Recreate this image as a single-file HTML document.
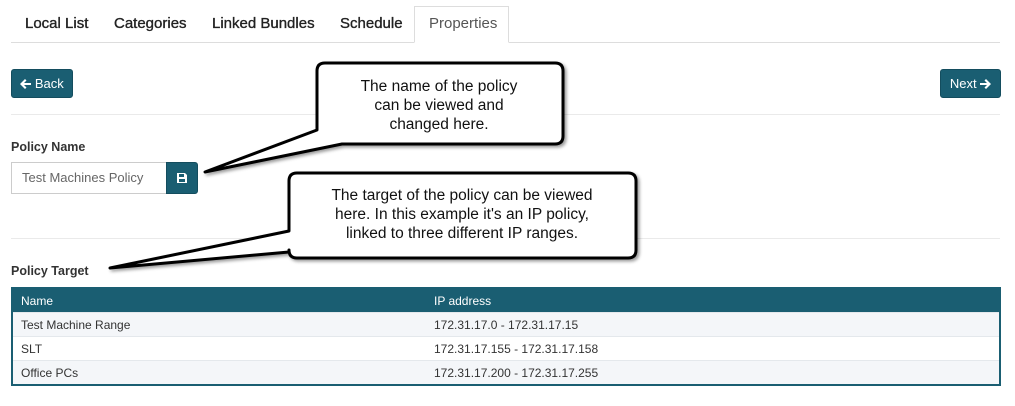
<!DOCTYPE html>
<html><head><style>
body{margin:0;width:1015px;height:406px;background:#fff;font-family:"Liberation Sans",sans-serif;position:relative;overflow:hidden;color:#333}
.a{position:absolute}
.tab{position:absolute;top:15px;font-size:15px;color:#222;-webkit-text-stroke:0.35px #222}
.btn{position:absolute;background:#1a5e72;color:#fff;border-radius:3px;font-size:13px;line-height:28px;text-align:center;border:1px solid #144d5e;box-sizing:border-box}
.hr{position:absolute;left:11px;width:989px;height:1px;background:#eaeaea}
table{position:absolute;left:11px;top:287px;width:990px;border-collapse:collapse;font-size:12px;border:2px solid #1a5e72}
td,th{padding:0 8px;height:23px;text-align:left;font-weight:normal;border-bottom:1px solid #e4e8ec}
th{background:#1a5e72;color:#fff;height:23px}
tr.g td{background:#f4f6f9}
</style></head><body>
<div class="a" style="left:11px;top:42px;width:989px;height:1px;background:#ddd"></div>
<div class="a" style="left:414px;top:6px;width:95px;height:37px;border:1px solid #ddd;border-bottom:1px solid #fff;box-sizing:border-box;background:#fff"></div>
<div class="tab" style="left:25px">Local List</div>
<div class="tab" style="left:114px">Categories</div>
<div class="tab" style="left:212px">Linked Bundles</div>
<div class="tab" style="left:340px">Schedule</div>
<div class="tab" style="left:429px;color:#555;-webkit-text-stroke:0">Properties</div>
<div class="btn" style="left:11px;top:69px;width:62px;height:29px"><svg width="11" height="10" viewBox="0 0 11 10" style="vertical-align:-1px"><path d="M0 5 L5 0 L6.5 1.5 L4 4 H11 V6 H4 L6.5 8.5 L5 10 Z" fill="#fff"/></svg> Back</div>
<div class="btn" style="left:940px;top:69px;width:61px;height:29px">Next <svg width="11" height="10" viewBox="0 0 11 10" style="vertical-align:-1px"><path d="M11 5 L6 0 L4.5 1.5 L7 4 H0 V6 H7 L4.5 8.5 L6 10 Z" fill="#fff"/></svg></div>
<div class="hr" style="top:114px"></div>
<div class="a" style="left:11px;top:140px;font-size:12.5px;font-weight:bold">Policy Name</div>
<div class="a" style="left:11px;top:162px;width:157px;height:32px;border:1px solid #ccc;box-sizing:border-box;font-size:13px;color:#666;line-height:30px;padding-left:10px">Test Machines Policy</div>
<div class="btn" style="left:166px;top:162px;width:32px;height:32px;border-radius:0 3px 3px 0"><svg width="10" height="10" viewBox="0 0 10 10" style="margin-top:10px"><path d="M0 0 H8 L10 2 V10 H0 Z" fill="#fff"/><rect x="2" y="1" width="5" height="3" fill="#1a5e72"/><rect x="2" y="6" width="6" height="3" fill="#1a5e72"/></svg></div>
<div class="hr" style="top:238px"></div>
<div class="a" style="left:11px;top:264px;font-size:12.5px;font-weight:bold">Policy Target</div>
<table>
<tr><th style="width:397px">Name</th><th>IP address</th></tr>
<tr class="g"><td>Test Machine Range</td><td>172.31.17.0 - 172.31.17.15</td></tr>
<tr><td>SLT</td><td>172.31.17.155 - 172.31.17.158</td></tr>
<tr class="g"><td>Office PCs</td><td>172.31.17.200 - 172.31.17.255</td></tr>
</table>
<svg class="a" style="left:0;top:0" width="1015" height="406">
<defs><filter id="s"><feDropShadow dx="2" dy="2" stdDeviation="1.5" flood-opacity="0.4"/></filter></defs>
<path filter="url(#s)" d="M325 63 H555 Q563 63 563 71 V136 Q563 144 555 144 H342 L205 172 L317 130 V71 Q317 63 325 63 Z" fill="#fff" stroke="#000" stroke-width="3" stroke-linejoin="round"/>
<path filter="url(#s)" d="M297 173 H628 Q636 173 636 181 V250 Q636 258 628 258 H297 Q289 258 289 250 V252 L110 268 L289 231 V181 Q289 173 297 173 Z" fill="#fff" stroke="#000" stroke-width="3" stroke-linejoin="round"/>
<g font-family="Liberation Sans,sans-serif" font-size="15.5" fill="#111" text-anchor="middle">
<text x="439" y="91">The name of the policy</text>
<text x="439" y="110">can be viewed and</text>
<text x="439" y="129">changed here.</text>
<text x="462" y="200">The target of the policy can be viewed</text>
<text x="462" y="219">here. In this example it's an IP policy,</text>
<text x="462" y="238">linked to three different IP ranges.</text>
</g>
</svg>
</body></html>
